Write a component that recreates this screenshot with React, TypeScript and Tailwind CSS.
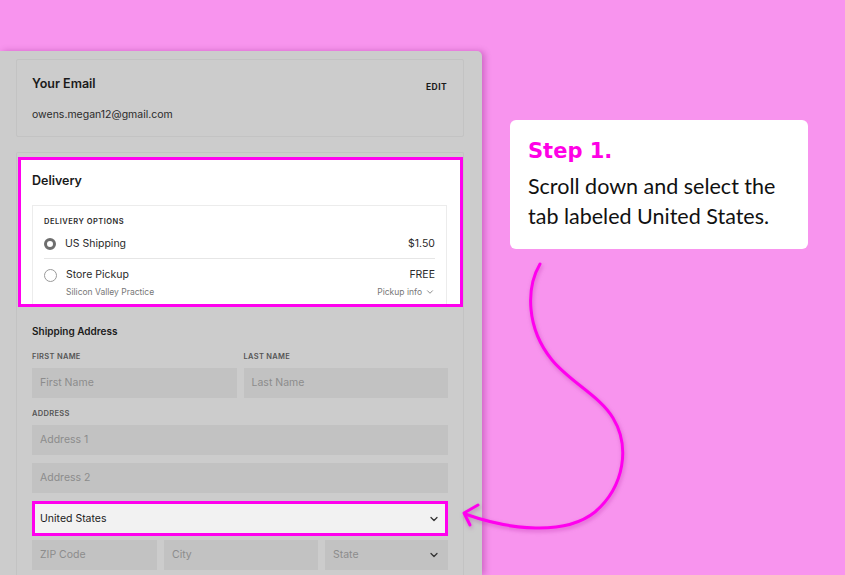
import { ChevronDown } from "lucide-react";

const ui = { fontFamily: "Inter, 'Liberation Sans', sans-serif" };

function Field({ placeholder, className = "" }: { placeholder: string; className?: string }) {
  return (
    <div className={`h-[30px] bg-[#c2c2c2] flex items-center px-[8px] text-[10.5px] text-[#8c8c8c] ${className}`}>
      {placeholder}
    </div>
  );
}

function Label({ children }: { children: string }) {
  return <div className="text-[7.5px] font-semibold tracking-[0.3px] text-[#555] h-[12px] leading-[12px]">{children}</div>;
}

function Checkout() {
  return (
    <div
      className="w-[482px] shrink-0 bg-[#cccccc] rounded-tr-[5px] shadow-[3px_0_6px_rgba(120,0,110,0.3)] pt-[8px] px-[16px] h-[524px]"
      style={ui}
    >
      <div className="border border-[#c3c3c3] rounded-[2px] h-[78px] w-[448px] px-[15px] pt-[15px]">
        <div className="flex justify-between items-start">
          <span className="text-[12.5px] font-semibold text-[#1a1a1a] leading-[18px]">Your Email</span>
          <span className="text-[8.5px] font-bold text-[#1a1a1a] tracking-[0.4px] mt-[6px] mr-[1px]">EDIT</span>
        </div>
        <div className="text-[10.5px] text-[#2a2a2a] mt-[13px]">owens.megan12@gmail.com</div>
      </div>

      <div className="border border-[#c3c3c3] border-b-0 rounded-t-[2px] mt-[15px] w-[448px] h-[430px]">
        <div className="ml-[1px] mt-[4px] h-[150px] border-[3px] border-[#ff00ee] bg-white overflow-hidden px-[11px] pt-[12px]">
          <div className="text-[12.5px] font-semibold text-[#1a1a1a] leading-[18px]">Delivery</div>
          <div className="mt-[15px] border border-[#ececec] h-[130px] px-[11px] pt-[10px] mr-[2px]">
            <div className="text-[7.5px] font-semibold tracking-[0.5px] text-[#2a2a2a] leading-[12px]">DELIVERY OPTIONS</div>
            <div className="flex items-center justify-between h-[31px] pt-[1px] border-b border-[#e6e6e6]">
              <div className="flex items-center gap-[9px] text-[10.5px] text-[#2a2a2a]">
                <span className="w-[12px] h-[12px] rounded-full border-[3.5px] border-[#6e6e6e] bg-white" />
                US Shipping
              </div>
              <span className="text-[10.5px] text-[#2a2a2a]">$1.50</span>
            </div>
            <div className="flex items-center justify-between h-[32px]">
              <div className="flex items-center gap-[9px] text-[10.5px] text-[#2a2a2a]">
                <span className="w-[13px] h-[13px] rounded-full border border-[#9a9a9a] bg-white" />
                Store Pickup
              </div>
              <span className="text-[10.5px] text-[#2a2a2a]">FREE</span>
            </div>
            <div className="flex items-center justify-between -mt-[5px] pl-[22px] text-[8.5px] text-[#777]">
              <span>Silicon Valley Practice</span>
              <span className="flex items-center gap-[3px]">
                Pickup info
                <ChevronDown size={10} strokeWidth={2} className="text-[#777]" />
              </span>
            </div>
          </div>
        </div>

        <div className="px-[15px] pt-[17px]">
          <div className="text-[10px] font-semibold text-[#1a1a1a] leading-[14px]">Shipping Address</div>
          <div className="grid grid-cols-2 gap-x-[7px] mt-[13px]">
            <div>
              <Label>FIRST NAME</Label>
              <Field placeholder="First Name" className="mt-[5px]" />
            </div>
            <div>
              <Label>LAST NAME</Label>
              <Field placeholder="Last Name" className="mt-[5px]" />
            </div>
          </div>
          <div className="mt-[10px]">
            <Label>ADDRESS</Label>
            <Field placeholder="Address 1" className="mt-[5px]" />
            <Field placeholder="Address 2" className="mt-[8px]" />
          </div>
          <div className="mt-[8px] h-[35px] border-[3px] border-[#ff00ee] bg-[#f2f2f2] flex items-center justify-between px-[5px] text-[10.5px] text-[#1a1a1a]">
            United States
            <ChevronDown size={12} strokeWidth={2.5} className="text-[#333]" />
          </div>
          <div className="flex gap-[7px] mt-[4px]">
            <Field placeholder="ZIP Code" className="w-[125px]" />
            <Field placeholder="City" className="w-[154px]" />
            <div className="h-[30px] flex-1 bg-[#c2c2c2] flex items-center justify-between px-[8px] text-[10.5px] text-[#8c8c8c]">
              State
              <ChevronDown size={12} strokeWidth={2.5} className="text-[#333]" />
            </div>
          </div>
        </div>
      </div>
    </div>
  );
}

function Arrow() {
  return (
    <svg className="absolute inset-0 pointer-events-none" width="845" height="575" viewBox="0 0 845 575">
      <defs>
        <filter id="glow" x="-20%" y="-20%" width="140%" height="140%">
          <feDropShadow dx="1" dy="2" stdDeviation="2" floodColor="#a0008f" floodOpacity="0.35" />
        </filter>
      </defs>
      <g fill="none" stroke="#ff00ee" strokeWidth="3" strokeLinecap="round" strokeLinejoin="round" filter="url(#glow)">
        <path d="M540 264 C526 288 526 328 552 360 C570 382 600 396 613 418 C630 446 625 486 595 512 C565 536 510 530 465 514" />
        <path d="M478 505 L464 513 L470 525" />
      </g>
    </svg>
  );
}

export default function App() {
  return (
    <div className="relative w-[845px] h-[575px] overflow-hidden bg-[#f894ee]">
      <div className="flex pt-[51px]">
        <Checkout />
        <div className="ml-[28px] mt-[69px] w-[298px] h-[129px] bg-white rounded-[6px] px-[18px] pt-[17px]">
          <div
            className="text-[21px] font-bold text-[#ff00e6] leading-[28px]"
            style={{ fontFamily: "'DejaVu Sans', sans-serif" }}
          >
            Step 1.
          </div>
          <div
            className="text-[21.5px] text-[#111] leading-[30px] mt-[6px] w-[272px]"
            style={{ fontFamily: "Lato, 'Open Sans', sans-serif" }}
          >
            Scroll down and select the tab labeled United States.
          </div>
        </div>
      </div>
      <Arrow />
    </div>
  );
}
